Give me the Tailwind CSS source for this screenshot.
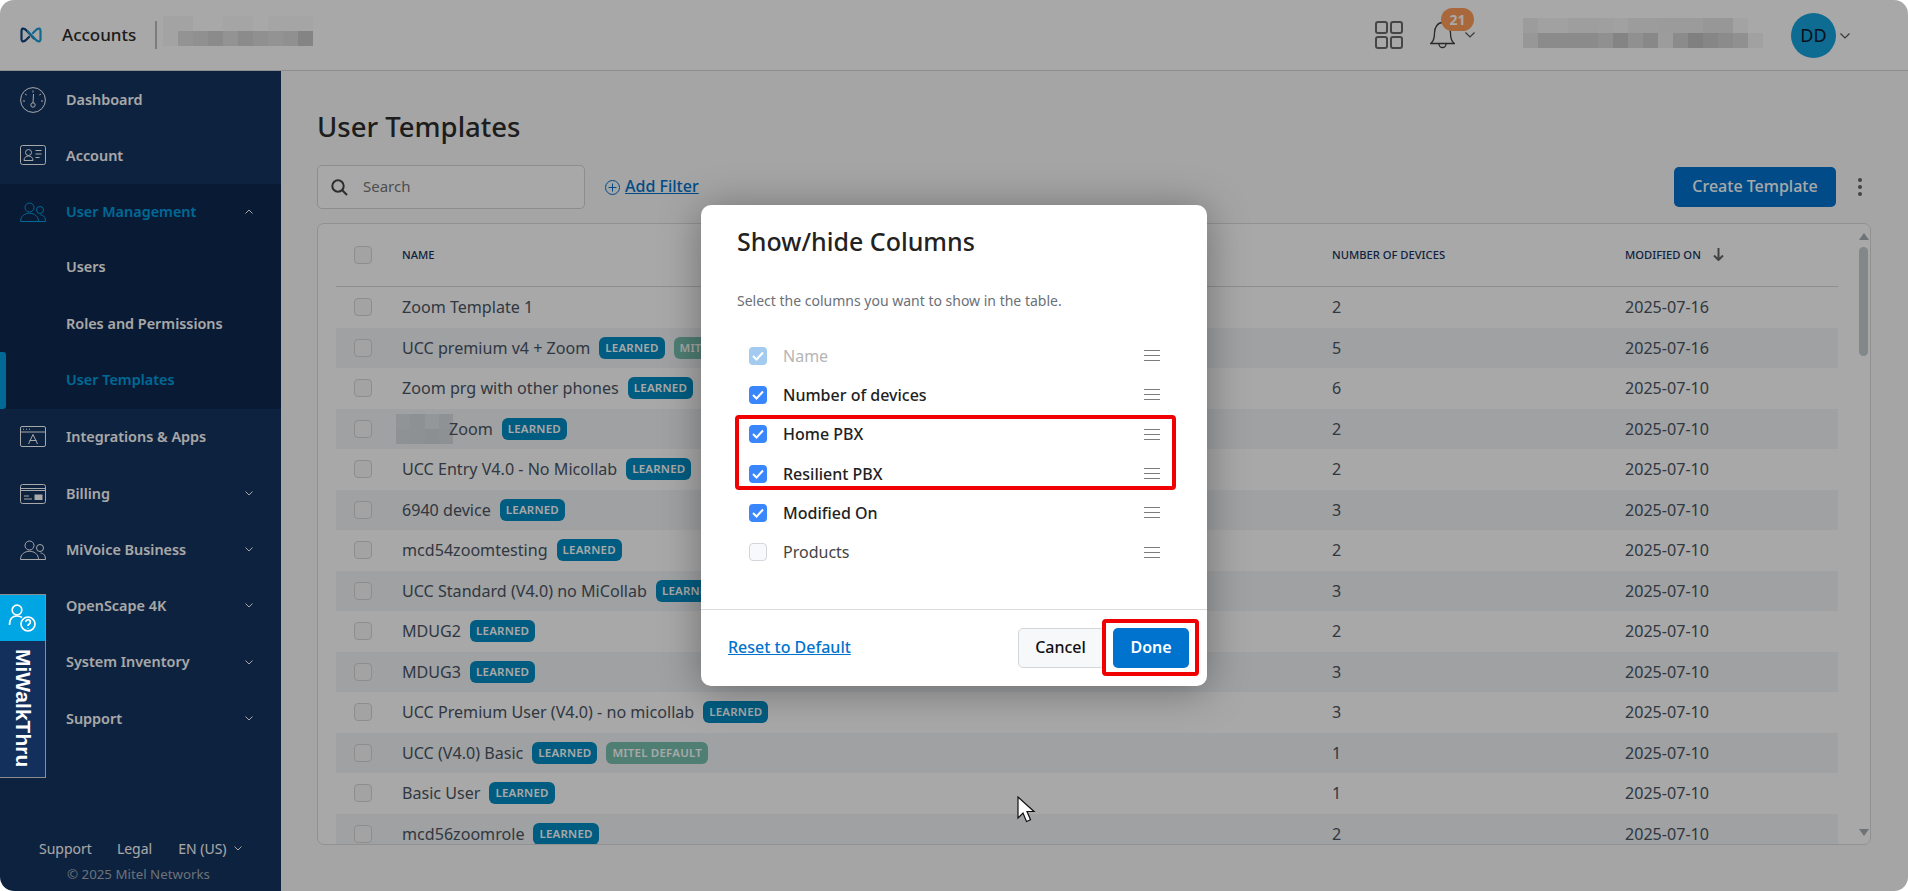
<!DOCTYPE html>
<html lang="en">
<head>
  <meta charset="UTF-8" />
  <meta name="viewport" content="width=device-width, initial-scale=1.0" />
  <title>User Templates</title>
  <script src="https://cdn.jsdelivr.net/npm/@tailwindcss/browser@4"></script>
</head>
<body class="relative w-[1908px] h-[891px] overflow-hidden bg-white font-['Noto_Sans',sans-serif]">
  <div class="flex flex-col w-full h-full rounded-[14px] overflow-hidden bg-[#fafafa]">

    <!-- Top bar -->
    <header class="flex items-center h-[71px] shrink-0 bg-white border-b border-[#d8d8d8] pl-[20px]">
      <svg class="w-[22px] h-[16px] shrink-0" viewBox="0 0 22 16" fill="none" stroke-width="2.2" stroke-linecap="round">
        <path d="M14 11.500 L5.500 2.500 Q1.500 0 1.500 4 V12 Q1.500 16 5.500 13.500 L9 10" stroke="#12447f"/>
        <path d="M8 4.500 L16.500 13.500 Q20.500 16 20.500 12 V4 Q20.500 0 16.500 2.500 L13 6" stroke="#1e9fd8"/>
      </svg>
      <span class="ml-[20px] text-[17px] font-medium text-[#2b2b2b]">Accounts</span>
      <span class="ml-[19px] w-[2px] h-[28px] bg-[#bdbdbd]"></span>
      <div id="mosaic-left" class="ml-[6px] mb-[8px] flex flex-col"></div>
      <div class="ml-auto flex items-center">
        <svg class="w-[28px] h-[28px]" viewBox="0 0 28 28" fill="none" stroke="#6b6b6b" stroke-width="2">
          <rect x="1" y="1" width="11" height="11" rx="2"/><rect x="16" y="1" width="11" height="11" rx="2"/>
          <rect x="1" y="16" width="11" height="11" rx="2"/><rect x="16" y="16" width="11" height="11" rx="2"/>
        </svg>
        <div class="relative w-[45px] h-[30px] ml-[27px]">
          <svg class="absolute left-0 top-0 w-[25px] h-[30px]" viewBox="0 0 25 30" fill="none" stroke="#3f3f3f" stroke-width="1.3">
            <path d="M.7 23.500 C3.500 21.500 4.500 19 4.500 13 C4.500 7 8 2.500 12.500 2.500 C17 2.500 20.500 7 20.500 13 C20.500 19 21.500 21.500 24.300 23.500 Z"/>
            <path d="M9 24 a3.500 3.500 0 0 0 7 0"/>
          </svg>
          <span class="absolute left-[11px] top-[-12px] w-[33px] h-[23px] rounded-[12px] bg-[#ff9f5c] text-white text-[14px] font-bold leading-[23px] text-center">21</span>
          <svg class="absolute left-[35px] top-[12px] w-[10px] h-[6px]" viewBox="0 0 10 6" fill="none" stroke="#555" stroke-width="1.2"><path d="M.5.5 5 5 9.500.5"/></svg>
        </div>
        <div id="mosaic-right" class="ml-[48px] mb-[4px] flex flex-col"></div>
        <span class="ml-[28px] flex items-center justify-center w-[45px] h-[45px] rounded-full bg-[#16a3dc] text-[18px] text-[#0e1a2b]">DD</span>
        <svg class="ml-[4px] mr-[58px] mt-[2px] w-[10px] h-[6px]" viewBox="0 0 10 6" fill="none" stroke="#555" stroke-width="1.2"><path d="M.5.5 5 5 9.500.5"/></svg>
      </div>
    </header>

    <div class="flex flex-1 min-h-0">
      <!-- Sidebar -->
      <aside class="relative w-[281px] shrink-0 flex flex-col bg-[#153460] rounded-bl-[14px] text-[14.4px] font-semibold text-white">
        <a class="flex items-center h-[56.3px] pl-[20px] pt-[1px]">
          <svg class="w-[26px] h-[26px] mr-[20px]" viewBox="0 0 26 26" fill="none" stroke="#fff" stroke-width="1">
            <circle cx="13" cy="13" r="12.4"/><path d="M13 3.500v2M5 7l1.700 1M21 7l-1.700 1M3 14h2M21 14h2"/>
            <path d="M13.500 7 13 16"/><circle cx="13" cy="18" r="2.200"/>
          </svg>Dashboard
        </a>
        <a class="flex items-center h-[56.3px] pl-[20px]">
          <svg class="w-[26px] h-[20px] mr-[20px]" viewBox="0 0 26 20" fill="none" stroke="#fff" stroke-width="1">
            <rect x=".5" y=".5" width="25" height="19" rx="2"/>
            <circle cx="8.500" cy="7.500" r="3"/><path d="M4 15.500c0-6 9-6 9 0zM15.500 5.500h6M15.500 9h6M15.500 12.500h4"/>
          </svg>Account
        </a>
        <div class="bg-[#0f2950]">
          <a class="flex items-center h-[56.3px] pl-[20px] text-[#00a0e2]">
            <svg class="w-[26px] h-[20px] mr-[20px]" viewBox="0 0 26 20" fill="none" stroke="#00a0e2" stroke-width="1">
              <circle cx="9.500" cy="5.500" r="4.500"/><path d="M.5 19.500c0-11 18-11 18 0z"/>
              <circle cx="20" cy="8" r="3.500"/><path d="M18 19.500h7.500c0-4-2-6.500-5-6.500"/>
            </svg>User Management
            <svg class="ml-auto mr-[28px] w-[8px] h-[5px]" viewBox="0 0 8 5" fill="none" stroke="#fff" stroke-width="1"><path d="M.5 4.500 4 1l3.500 3.500"/></svg>
          </a>
          <a class="flex items-center h-[56.3px] pl-[66px] pb-[2px]">Users</a>
          <a class="flex items-center h-[56.3px] pl-[66px] pb-[2px]">Roles and Permissions</a>
          <a class="relative flex items-center h-[56.3px] pl-[66px] pb-[2px] text-[#00a0e2]">
            <span class="absolute left-0 top-0 bottom-0 w-[6px] rounded-r-[3px] bg-[#00a0e2]"></span>User Templates
          </a>
        </div>
        <a class="flex items-center h-[56.3px] pl-[20px]">
          <svg class="w-[26px] h-[21px] mr-[20px]" viewBox="0 0 26 21" fill="none" stroke="#fff" stroke-width="1">
            <rect x=".5" y=".5" width="25" height="20" rx="1.500"/><path d="M.5 6h25M3 3.200h1M6 3.200h1M9 3.200h1"/>
            <path d="M13 8.500 8.500 18M13 8.500l4.500 9.500M9.500 14.500h7" />
          </svg>Integrations &amp; Apps
        </a>
        <a class="flex items-center h-[56.3px] pl-[20px] pt-[1px]">
          <svg class="w-[26px] h-[20px] mr-[20px]" viewBox="0 0 26 20" fill="none" stroke="#fff" stroke-width="1">
            <rect x=".5" y=".5" width="25" height="19" rx="2"/><path d="M.5 4.500h25M.5 6.500h25M4 12h5M4 15h8"/>
            <rect x="15" y="11" width="7" height="4.500" fill="#fff"/>
          </svg>Billing
          <svg class="ml-auto mr-[28px] w-[8px] h-[5px]" viewBox="0 0 8 5" fill="none" stroke="#fff" stroke-width="1"><path d="M.5.5 4 4 7.500.5"/></svg>
        </a>
        <a class="flex items-center h-[56.3px] pl-[20px]">
          <svg class="w-[26px] h-[20px] mr-[20px]" viewBox="0 0 26 20" fill="none" stroke="#fff" stroke-width="1">
            <circle cx="9.500" cy="5.500" r="4.500"/><path d="M.5 19.500c0-11 18-11 18 0z"/>
            <circle cx="20" cy="8" r="3.500"/><path d="M18 19.500h7.500c0-4-2-6.500-5-6.500"/>
          </svg>MiVoice Business
          <svg class="ml-auto mr-[28px] w-[8px] h-[5px]" viewBox="0 0 8 5" fill="none" stroke="#fff" stroke-width="1"><path d="M.5.5 4 4 7.500.5"/></svg>
        </a>
        <a class="flex items-center h-[56.3px] pl-[66px]">OpenScape 4K
          <svg class="ml-auto mr-[28px] w-[8px] h-[5px]" viewBox="0 0 8 5" fill="none" stroke="#fff" stroke-width="1"><path d="M.5.5 4 4 7.500.5"/></svg>
        </a>
        <a class="flex items-center h-[56.3px] pl-[66px]">System Inventory
          <svg class="ml-auto mr-[28px] w-[8px] h-[5px]" viewBox="0 0 8 5" fill="none" stroke="#fff" stroke-width="1"><path d="M.5.5 4 4 7.500.5"/></svg>
        </a>
        <a class="flex items-center h-[56.3px] pl-[66px]">Support
          <svg class="ml-auto mr-[28px] w-[8px] h-[5px]" viewBox="0 0 8 5" fill="none" stroke="#fff" stroke-width="1"><path d="M.5.5 4 4 7.500.5"/></svg>
        </a>
        <div class="mt-auto pb-[8px] font-normal text-[14px]">
          <div class="flex items-center pl-[39px] h-[24px] text-[#fff]">
            <span>Support</span><span class="ml-[25px]">Legal</span><span class="ml-[26px]">EN (US)</span>
            <svg class="ml-[7px] w-[8px] h-[5px]" viewBox="0 0 8 5" fill="none" stroke="#fff" stroke-width="1"><path d="M.5.5 4 4 7.500.5"/></svg>
          </div>
          <p class="pl-[67px] mt-[5px] text-[13.3px] leading-[18px] text-[#a3adba]">© 2025 Mitel Networks</p>
        </div>
      </aside>

      <!-- Main content -->
      <main class="flex-1 min-w-0 pl-[36px] pr-[37px]">
        <h1 class="mt-[37px] text-[27.5px] leading-[38px] font-medium text-[#2d2d2d]">User Templates</h1>
        <div class="flex items-center mt-[19px] h-[44px]">
          <div class="flex items-center w-[268px] h-[44px] rounded-[5px] border border-[#d6d6d6] bg-white pl-[13px]">
            <svg class="w-[17px] h-[17px]" viewBox="0 0 17 17" fill="none" stroke="#444" stroke-width="2"><circle cx="7" cy="7" r="5.700"/><path d="m11 11 5 5"/></svg>
            <span class="ml-[15px] pb-[2px] text-[15px] text-[#777]">Search</span>
          </div>
          <svg class="ml-[20px] w-[15px] h-[15px]" viewBox="0 0 15 15" fill="none" stroke="#0073cf" stroke-width="1"><circle cx="7.500" cy="7.500" r="7"/><path d="M7.500 3.500v8M3.500 7.500h8"/></svg>
          <a class="ml-[5px] pb-[2px] text-[16px] font-medium text-[#0073cf] underline">Add Filter</a>
          <button class="ml-auto w-[162px] h-[40px] pb-[2px] rounded-[5px] bg-[#0073cf] text-[16px] font-medium text-white">Create Template</button>
          <span class="ml-[22px] mr-[9px] flex flex-col gap-[3px]">
            <i class="w-[4px] h-[4px] rounded-full bg-[#666]"></i><i class="w-[4px] h-[4px] rounded-full bg-[#666]"></i><i class="w-[4px] h-[4px] rounded-full bg-[#666]"></i>
          </span>
        </div>

        <section class="flex mt-[14px] h-[622px] rounded-[7px] border border-[#dcdcdc] bg-white overflow-hidden">
          <div class="w-[1502px] ml-[18px] shrink-0">
            <div class="grid grid-cols-[66px_930px_293px_1fr] items-center h-[63px] border-b border-[#d8d8d8] text-[11.2px] font-medium text-[#163560]">
              <span class="ml-[18px] w-[18px] h-[18px] rounded-[4px] border border-[#d3d6da] bg-[#f7f8f9]"></span>
              <span>NAME</span>
              <span>NUMBER OF DEVICES</span>
              <span class="flex items-center">MODIFIED ON
                <svg class="ml-[12px] w-[11px] h-[13px]" viewBox="0 0 11 13" fill="none" stroke="#666" stroke-width="2"><path d="M5.500 0v12M1 7.500l4.500 4.500L10 7.500"/></svg>
              </span>
            </div>
            <div id="rows"></div>
          </div>
          <div class="flex flex-col pl-[21px] pt-[9px]">
            <span class="w-0 h-0 border-x-[5px] border-x-transparent border-b-[7px] border-b-[#a9afb3]"></span>
            <span class="mt-[7px] w-[9px] h-[109px] rounded-[5px] bg-[#c5cdd2]"></span>
            <span class="mt-[473px] w-0 h-0 border-x-[5px] border-x-transparent border-t-[7px] border-t-[#a9afb3]"></span>
          </div>
        </section>
      </main>
    </div>
  </div>

  <!-- Dim layer under the dialog -->
  <div class="absolute inset-0 rounded-[14px] bg-black/[0.34]"></div>

  <!-- Show/hide columns dialog -->
  <div class="absolute left-[701px] top-[205px] w-[506px] h-[481px] flex flex-col rounded-[10px] bg-white shadow-[0_4px_40px_rgba(0,0,0,0.35)]">
    <h2 class="ml-[36px] mt-[18px] text-[25px] leading-[36px] font-medium text-[#222]">Show/hide Columns</h2>
    <p class="ml-[36px] mt-[32px] text-[14px] leading-[20px] text-[#6b7077]">Select the columns you want to show in the table.</p>
    <ul id="columns" class="mt-[25px] flex-1"></ul>
    <div class="flex items-center h-[77px] border-t border-[#d8dbde] pl-[27px] pr-[18px]">
      <a class="pb-[2px] text-[16px] font-medium text-[#0073cf] underline">Reset to Default</a>
      <button class="ml-auto w-[87px] h-[40px] pb-[2px] pr-[2px] rounded-[5px] border border-[#d3d7db] bg-[#f7f8f9] text-[16px] font-medium text-[#111]">Cancel</button>
      <button class="ml-[8px] w-[76px] h-[40px] pb-[2px] rounded-[5px] bg-[#0073cf] text-[16px] font-semibold text-white">Done</button>
    </div>
    <!-- Red callouts -->
    <span class="absolute left-[34px] top-[210px] w-[441px] h-[75px] rounded-[4px] border-4 border-[#f00000]"></span>
    <span class="absolute left-[401px] top-[414px] w-[97px] h-[57px] rounded-[4px] border-4 border-[#f00000]"></span>
  </div>

  <!-- MiWalkThru launcher -->
  <div class="absolute left-0 top-[594px] w-[46px] h-[184px] flex flex-col border border-l-0 border-[#8c8c8c] bg-[#132f5c]">
    <div class="flex items-center justify-center h-[46px] bg-[#00a5e3]">
      <svg class="w-[30px] h-[30px]" viewBox="0 0 30 30" fill="none" stroke="#fff" stroke-width="1.7">
        <circle cx="9" cy="7" r="4.800"/><path d="M1.500 22c0-6 3-9 7.500-9 2 0 3.500 .5 5 1.500"/>
        <circle cx="20" cy="21" r="7"/><path d="M17.800 19a2.300 2.300 0 1 1 3.500 2c-1 .6-1.300 1-1.300 2M20 25v.5"/>
      </svg>
    </div>
    <div class="flex-1 flex justify-center pt-[8px]">
      <span class="[writing-mode:vertical-rl] font-['Liberation_Sans',sans-serif] text-[21px] leading-[22px] font-bold text-white">MiWalkThru</span>
    </div>
  </div>

  <!-- Mouse pointer -->
  <svg class="absolute left-[1017px] top-[796px] w-[19px] h-[27px]" viewBox="0 0 19 27">
    <path d="M1 1v21l5-5 3.500 8.500 4-1.700L10 15.500h7z" fill="#fff" stroke="#111" stroke-width="1.2"/>
  </svg>

<script>
const rows = [
  ['Zoom Template 1', [], 2, '2025-07-16'],
  ['UCC premium v4 + Zoom', ['learned', 'mitel'], 5, '2025-07-16'],
  ['Zoom prg with other phones', ['learned'], 6, '2025-07-10'],
  ['Zoom', ['learned'], 2, '2025-07-10', true],
  ['UCC Entry V4.0 - No Micollab', ['learned'], 2, '2025-07-10'],
  ['6940 device', ['learned'], 3, '2025-07-10'],
  ['mcd54zoomtesting', ['learned'], 2, '2025-07-10'],
  ['UCC Standard (V4.0) no MiCollab', ['learned'], 3, '2025-07-10'],
  ['MDUG2', ['learned'], 2, '2025-07-10'],
  ['MDUG3', ['learned'], 3, '2025-07-10'],
  ['UCC Premium User (V4.0) - no micollab', ['learned'], 3, '2025-07-10'],
  ['UCC (V4.0) Basic', ['learned', 'mitel'], 1, '2025-07-10'],
  ['Basic User', ['learned'], 1, '2025-07-10'],
  ['mcd56zoomrole', ['learned'], 2, '2025-07-10'],
];

const badge = {
  learned: '<span class="ml-[9px] px-[6px] h-[22px] leading-[22px] rounded-[6px] bg-[#008cc2] text-white text-[11.5px] font-semibold tracking-[0.2px]">LEARNED</span>',
  mitel: '<span class="ml-[9px] px-[6px] h-[22px] leading-[22px] rounded-[6px] bg-[#78c0ae] text-white text-[11.5px] font-semibold tracking-[0.2px] whitespace-nowrap">MITEL DEFAULT</span>',
};

const blurred = '<span class="relative w-[49px] h-[30px] mr-[-2px]"><span class="absolute left-[-6px] top-0 flex flex-wrap w-[57px]">'
  + [.08, .12, .05, .1, .1, .12, .14, .12].map(a => `<i class="w-[14.25px] h-[15px]" style="background:rgba(90,100,110,${a + .05})"></i>`).join('')
  + '</span></span>';

document.getElementById('rows').innerHTML = rows.map(([name, badges, devices, date, hidden], i) => `
  <div class="grid grid-cols-[66px_930px_293px_1fr] items-center h-[40.5px] text-[16.1px] text-[#4b5563] ${i % 2 ? 'bg-[#f1f4f7]' : ''}">
    <span class="ml-[18px] w-[18px] h-[18px] rounded-[4px] border border-[#d3d6da] bg-[#f7f8f9]"></span>
    <span class="flex items-center whitespace-nowrap">${hidden ? blurred : ''}${name}${badges.map(b => badge[b]).join('')}</span>
    <span>${devices}</span>
    <span>${date}</span>
  </div>`).join('');

const columns = [
  ['Name', 'disabled'],
  ['Number of devices', 'on'],
  ['Home PBX', 'on'],
  ['Resilient PBX', 'on'],
  ['Modified On', 'on'],
  ['Products', 'off'],
];
const tick = '<svg class="w-[12px] h-[10px]" viewBox="0 0 12 10" fill="none" stroke="#fff" stroke-width="2"><path d="M1 5l3.500 3.500L11 1.500"/></svg>';
const box = {
  disabled: `<span class="flex items-center justify-center w-[18px] h-[18px] rounded-[4px] bg-[#a3cbef]">${tick}</span>`,
  on: `<span class="flex items-center justify-center w-[18px] h-[18px] rounded-[4px] bg-[#3a87fd]">${tick}</span>`,
  off: '<span class="w-[18px] h-[18px] rounded-[4px] border border-[#d3d6da] bg-[#f8f9fa]"></span>',
};
const labelClass = {
  disabled: 'text-[#b5b5b5]',
  on: 'text-[#222] font-medium',
  off: 'text-[#444]',
};
document.getElementById('columns').innerHTML = columns.map(([label, state]) => `
  <li class="flex items-center h-[39.3px] pl-[48px] pr-[47px]">
    ${box[state]}
    <span class="ml-[16px] text-[16px] ${labelClass[state]}">${label}</span>
    <span class="ml-auto flex flex-col gap-[4px]">
      <i class="w-[16px] h-[1px] bg-[#7c7c7c]"></i><i class="w-[16px] h-[1px] bg-[#7c7c7c]"></i><i class="w-[16px] h-[1px] bg-[#7c7c7c]"></i>
    </span>
  </li>`).join('');

// pixelated (redacted) account names in the top bar
const mosaic = (id, data) => {
  document.getElementById(id).innerHTML = data.map(row =>
    '<div class="flex">' + row.map(a => `<i class="w-[15px] h-[15px]" style="background:rgba(0,0,0,${a})"></i>`).join('') + '</div>'
  ).join('');
};
mosaic('mosaic-left', [
  [.03, .03, 0, 0, .02, .02, 0, .02, .02, .02],
  [.03, .12, .14, .17, .12, .17, .14, .12, .14, .21],
]);
mosaic('mosaic-right', [
  [.07, .04, .04, .06, .06, .05, .04, .07, .07, .08, .08, .08, .1, .1, .03, 0],
  [.1, .17, .17, .17, .17, .14, .21, .14, .19, .07, .17, .24, .2, .17, .14, .04],
]);
</script>
</body>
</html>
